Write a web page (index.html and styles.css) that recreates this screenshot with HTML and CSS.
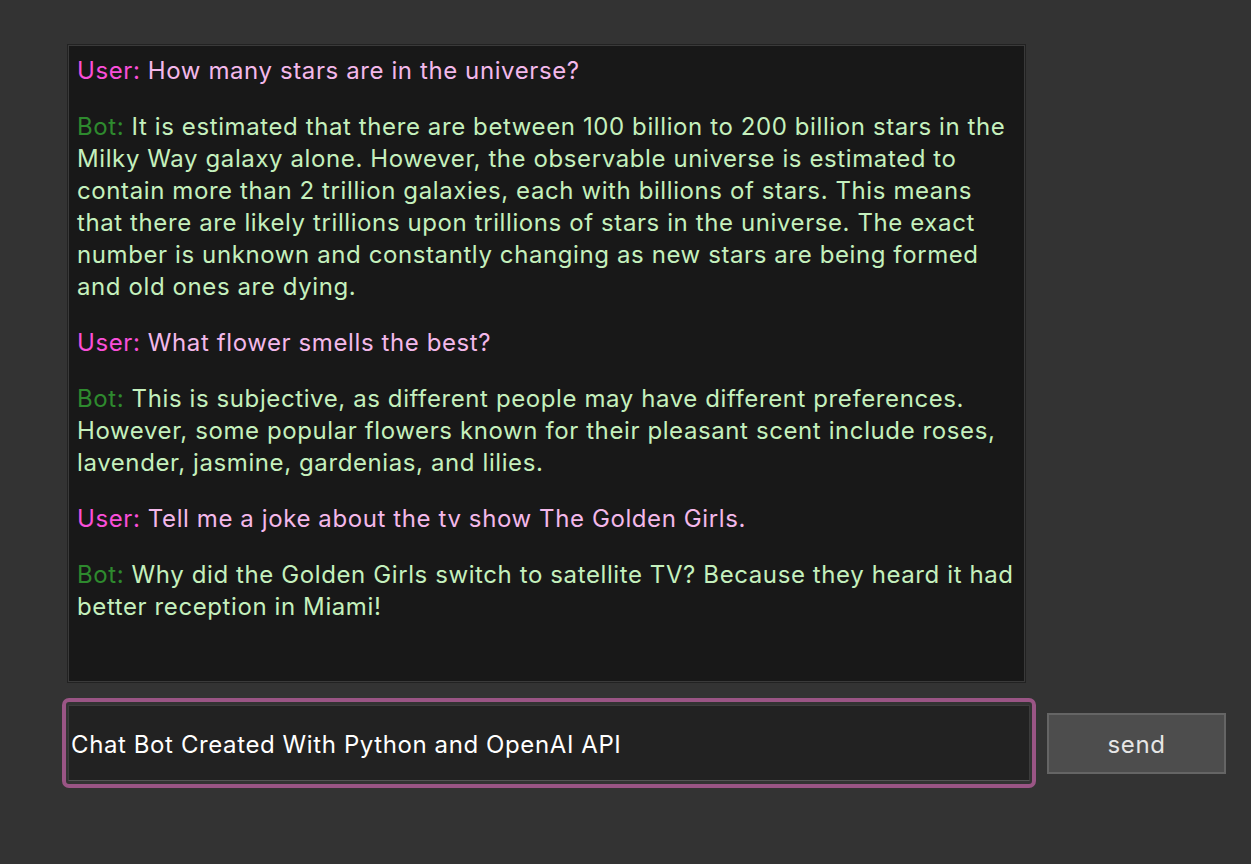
FILE: index.html
```html
<!DOCTYPE html>
<html lang="en">
<head>
  <meta charset="UTF-8" />
  <meta name="viewport" content="width=device-width, initial-scale=1.0"/>
  <title>Chat Bot</title>
  <link rel="stylesheet" href="styles.css">
</head>
<body>

  <!-- Historia rozmowy -->
  <div class="chat" id="chatLog">
    <p class="user"><span class="who">User:</span> How many stars are in the universe?</p>
    <p class="bot"><span class="who">Bot:</span> It is estimated that there are between 100 billion to 200 billion stars in the Milky Way galaxy alone. However, the observable universe is estimated to contain more than 2 trillion galaxies, each with billions of stars. This means that there are likely trillions upon trillions of stars in the universe. The exact number is unknown and constantly changing as new stars are being formed and old ones are dying.</p>
    <p class="user"><span class="who">User:</span> What flower smells the best?</p>
    <p class="bot"><span class="who">Bot:</span> This is subjective, as different people may have different preferences. However, some popular flowers known for their pleasant scent include roses, lavender, jasmine, gardenias, and lilies.</p>
    <p class="user"><span class="who">User:</span> Tell me a joke about the tv show The Golden Girls.</p>
    <p class="bot"><span class="who">Bot:</span> Why did the Golden Girls switch to satellite TV? Because they heard it had better reception in Miami!</p>
  </div>

  <!-- Pole wpisywania -->
  <div class="input-row">
    <div class="input-wrap">
      <input type="text" class="message" id="message" value="Chat Bot Created With Python and OpenAI API" />
    </div>
    <button class="send">send</button>
  </div>

</body>
</html>
```

FILE: styles.css
```css
body {
  background-color: #333333;
  color: white;
  font-family: Inter, "Noto Sans", sans-serif;
  margin: 0;
  padding: 44px 0 0 67px;
  height: 100vh;
  box-sizing: border-box;
}

.chat {
  width: 959px;
  height: 639px;
  box-sizing: border-box;
  background-color: #181818;
  border: 1px solid #222;
  box-shadow: inset 0 0 0 1px #3a3a3a;
  padding: 10px 7px 10px 9px;
  font-size: 24px;
  line-height: 32px;
  letter-spacing: 0.6px;
}

.chat p {
  margin: 0 0 24px;
}

.user {
  color: #f3b8ea;
}

.user .who {
  color: #f94fd9;
}

.bot {
  color: #c5f0bd;
}

.bot .who {
  color: #2e8a2e;
}

.input-row {
  display: flex;
  align-items: center;
  margin: 15px 0 0 -5px;
}

.input-wrap {
  width: 974px;
  height: 90px;
  box-sizing: border-box;
  border: 4px solid #9a5585;
  border-radius: 7px;
  padding: 3px 2px;
}

.message {
  width: 100%;
  height: 100%;
  box-sizing: border-box;
  background-color: #222;
  border: 1px solid #3c3c3c;
  border-bottom-color: #555;
  color: white;
  font-family: Inter, "Noto Sans", sans-serif;
  font-size: 24px;
  letter-spacing: 0.6px;
  padding: 2px 2px 0;
  outline: none;
}

.send {
  width: 179px;
  height: 61px;
  margin-left: 11px;
  background-color: #4d4d4d;
  border: 2px solid #656565;
  color: #e6e6e6;
  font-family: Inter, "Noto Sans", sans-serif;
  font-size: 24px;
  letter-spacing: 0.6px;
  padding-top: 3px;
  cursor: pointer;
}
```
